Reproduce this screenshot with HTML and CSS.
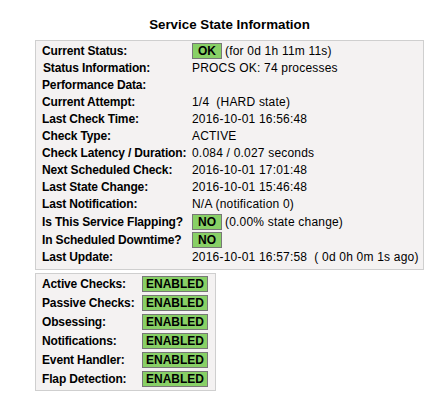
FILE: index.html
```html
<!DOCTYPE html>
<html>
<head>
<meta charset="utf-8">
<link rel="stylesheet" href="styles.css">
</head>
<body>
<div class="wrap">
  <div class="title">Service State Information</div>
  <div class="box state">
    <div class="lbl">Current Status:</div>
    <div class="val"><span class="badge small">OK</span><span>(for 0d 1h 11m 11s)</span></div>
    <div class="lbl shift">Status Information:</div>
    <div class="val">PROCS OK: 74 processes</div>
    <div class="lbl">Performance Data:</div>
    <div class="val"></div>
    <div class="lbl">Current Attempt:</div>
    <div class="val">1/4&nbsp;&nbsp;(HARD state)</div>
    <div class="lbl">Last Check Time:</div>
    <div class="val">2016-10-01 16:56:48</div>
    <div class="lbl">Check Type:</div>
    <div class="val">ACTIVE</div>
    <div class="lbl">Check Latency / Duration:</div>
    <div class="val">0.084&nbsp;/&nbsp;0.027 seconds</div>
    <div class="lbl">Next Scheduled Check:</div>
    <div class="val">2016-10-01 17:01:48</div>
    <div class="lbl">Last State Change:</div>
    <div class="val">2016-10-01 15:46:48</div>
    <div class="lbl">Last Notification:</div>
    <div class="val">N/A (notification 0)</div>
    <div class="lbl">Is This Service Flapping?</div>
    <div class="val"><span class="badge small">NO</span><span>(0.00% state change)</span></div>
    <div class="lbl">In Scheduled Downtime?</div>
    <div class="val"><span class="badge small">NO</span></div>
    <div class="lbl">Last Update:</div>
    <div class="val">2016-10-01 16:57:58&nbsp;&nbsp;(&nbsp;0d 0h 0m 1s ago)</div>
  </div>
  <div class="box checks">
    <div class="lbl">Active Checks:</div>
    <div class="badge wide">ENABLED</div>
    <div class="lbl">Passive Checks:</div>
    <div class="badge wide">ENABLED</div>
    <div class="lbl">Obsessing:</div>
    <div class="badge wide">ENABLED</div>
    <div class="lbl">Notifications:</div>
    <div class="badge wide">ENABLED</div>
    <div class="lbl">Event Handler:</div>
    <div class="badge wide">ENABLED</div>
    <div class="lbl">Flap Detection:</div>
    <div class="badge wide">ENABLED</div>
  </div>
</div>
</body>
</html>
```
FILE: styles.css
```css
* { box-sizing: border-box; }
html, body { margin: 0; padding: 0; background: #ffffff; }
body {
  font-family: "Liberation Sans", Arial, sans-serif;
  font-size: 12px;
  color: #000000;
}
.wrap {
  width: 389px;
  margin-left: 35px;
  padding-top: 17px;
}
.title {
  text-align: center;
  font-weight: bold;
  font-size: 13.33px;
  line-height: 16px;
  margin-bottom: 7px;
}
.box {
  background: #f4f2f2;
  border: 1px solid #cfcfcf;
  display: grid;
  align-items: center;
}
.state {
  width: 389px;
  grid-template-columns: 150px 1fr;
  row-gap: 2px;
  padding: 2px 6px 4px 6px;
  line-height: 15px;
}
.checks {
  width: 181px;
  margin-top: 3px;
  grid-template-columns: 100px 66px;
  grid-auto-rows: 16px;
  row-gap: 3px;
  padding: 2px 7px 3px 6px;
  line-height: 15px;
}
.lbl { font-weight: bold; white-space: nowrap; letter-spacing: -0.15px; }
.shift { padding-left: 1px; }
.val {
  display: flex;
  align-items: center;
  gap: 3px;
  white-space: nowrap;
  min-height: 15px;
  letter-spacing: 0.2px;
}
.badge {
  background: #88d066;
  border: 1px solid #777777;
  font-weight: bold;
  text-align: center;
  height: 16px;
  line-height: 14px;
  letter-spacing: 0;
}
.small { width: 30px; }
.wide { width: 66px; }
```
